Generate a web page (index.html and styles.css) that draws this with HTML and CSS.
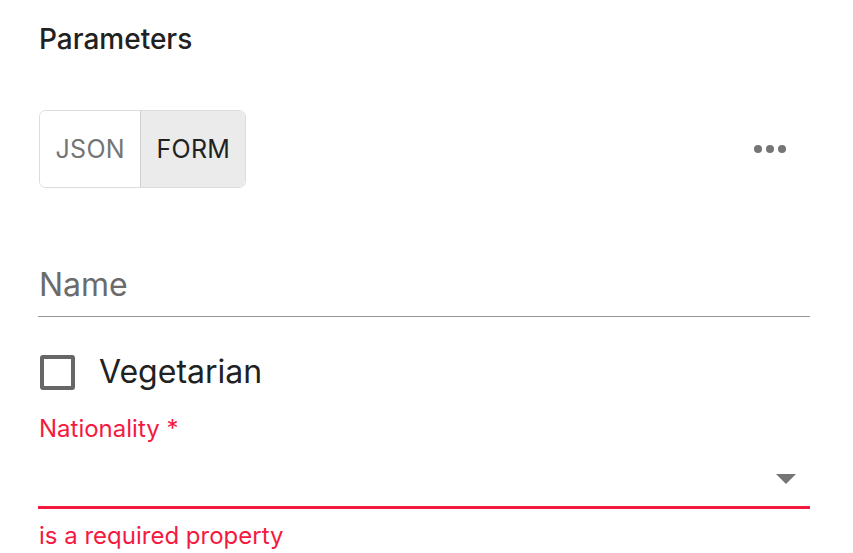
FILE: index.html
```html
<!DOCTYPE html>
<html>
<head>
<meta charset="utf-8">
<link rel="stylesheet" href="styles.css">
</head>
<body>
<div class="page">
  <div class="title">Parameters</div>
  <div class="toolbar">
    <div class="toggle">
      <button class="tbtn">JSON</button>
      <button class="tbtn selected">FORM</button>
    </div>
    <div class="more">
      <span class="dot"></span><span class="dot"></span><span class="dot"></span>
    </div>
  </div>
  <div class="field">
    <div class="input-label">Name</div>
  </div>
  <label class="check">
    <span class="box"></span>
    <span class="check-label">Vegetarian</span>
  </label>
  <div class="select-field">
    <div class="select-label">Nationality *</div>
    <div class="select">
      <svg class="arrow" width="20" height="10" viewBox="0 0 20 10"><path d="M0 0h20L10 10z" fill="#757575"/></svg>
    </div>
    <div class="helper">is a required property</div>
  </div>
</div>
</body>
</html>
```
FILE: styles.css
```css
* { box-sizing: border-box; }
html, body { margin: 0; padding: 0; background: #fff; }
body { font-family: Inter, "Noto Sans", sans-serif; color: #212121; }
.page { padding: 20px 43px 0 38px; width: 853px; }
.title { font-size: 28px; font-weight: 500; line-height: 38px; padding-left: 1px; }
.toolbar { display: flex; align-items: center; justify-content: space-between; margin-top: 52px; padding-left: 1px; }
.toggle { display: flex; border: 1.5px solid #dcdcdc; border-radius: 7px; overflow: hidden; height: 78px; }
.tbtn { font-family: inherit; font-size: 25px; font-weight: 400; border: none; background: #fff; color: #757575; padding: 0 15px 0 15.5px; letter-spacing: 0.3px; }
.tbtn + .tbtn { border-left: 1.5px solid #d0d0d0; }
.tbtn.selected { background: #ebebeb; color: #212121; }
.more { display: flex; gap: 4px; margin-right: 24px; }
.dot { width: 8px; height: 8px; border-radius: 50%; background: #757575; }
.field { margin-top: 77px; border-bottom: 1.5px solid #949494; height: 52px; }
.input-label { font-size: 32px; color: #6b6b6b; line-height: 40px; padding-left: 1px; }
.check { display: flex; align-items: center; margin-top: 35px; }
.box { width: 35px; height: 35px; border: 4px solid #666; border-radius: 3px; margin-left: 2px; }
.check-label { font-size: 32px; margin-left: 24px; line-height: 40px; }
.select-field { margin-top: 20px; color: #f5193f; }
.select-label { font-size: 24px; line-height: 34px; padding-left: 1px; }
.select { height: 63px; border-bottom: 3px solid #f5193f; display: flex; align-items: center; justify-content: flex-end; padding: 0 14px 0 0; }
.arrow { display: block; margin-top: 6px; }
.helper { font-size: 24px; line-height: 34px; margin-top: 10px; padding-left: 1px; }
```
